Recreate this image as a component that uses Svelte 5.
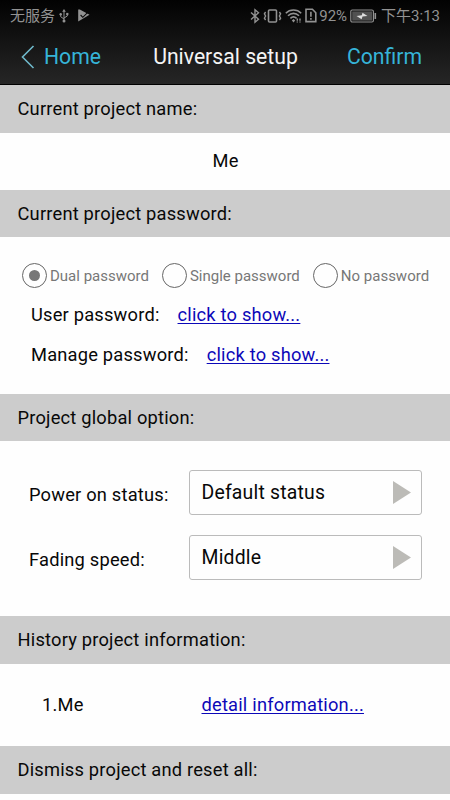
<script lang="ts">
	const modes = ['Dual password', 'Single password', 'No password'];
	let mode = $state('Dual password');

	const passwords = ['User password:', 'Manage password:'];
	const options = [
		{ label: 'Power on status:', value: 'Default status' },
		{ label: 'Fading speed:', value: 'Middle' }
	];
	const history = ['Me'];
</script>

<div class="screen">
	<div class="top">
		<div class="status">
			<span class="carrier">无服务</span>
			<svg class="usb" width="10" height="16" viewBox="0 0 10 16" fill="none" stroke="currentColor">
				<path d="M5 3v10M1.7 6.5v2.2L5 11M8.3 6v2L5 10" />
				<path d="M5 1l1.8 2.8H3.2z" fill="currentColor" stroke="none" />
				<circle cx="5" cy="13" r="1.5" fill="currentColor" stroke="none" />
				<circle cx="1.7" cy="6.2" r="1.2" fill="currentColor" stroke="none" />
				<path d="M7.2 4.9h2.2v2.2H7.2z" fill="currentColor" stroke="none" />
			</svg>
			<svg class="play" width="12" height="13" viewBox="0 0 12 13">
				<path d="M.2.5h1.6l9.7 5.2L.2 12.5z" fill="currentColor" />
				<path d="M2.6 6l2.2 2.3L10.5 2.6" fill="none" stroke="#080808" stroke-width="1.1" />
			</svg>
			<span class="grow"></span>
			<svg width="10" height="16" viewBox="0 0 10 16" fill="none" stroke="currentColor" stroke-width="1.4">
				<path d="M1 4.5l7.5 6.7L5 14.3V1.7l3.5 3.1L1 11.5" />
			</svg>
			<svg class="vibrate" width="19" height="16" viewBox="0 0 19 16" fill="none" stroke="currentColor" stroke-width="1.6">
				<rect x="5.5" y="2" width="8" height="12" rx="1" />
				<path d="M2.6 4L1.4 5.8 2.6 8l-1.2 2.2L2.6 12M16.4 4l1.2 1.8L16.4 8l1.2 2.2-1.2 1.8" stroke-width="1.4" />
			</svg>
			<svg class="wifi" width="17" height="15" viewBox="0 0 17 15" fill="none" stroke="currentColor" stroke-width="1.6">
				<path d="M.8 5.2C5 1 12 1 16.2 5.2M3 7.8c3.2-3.2 7.8-3.2 11 0M5.4 10.3c2-1.9 4.2-1.9 6.2 0" />
				<path d="M8.5 11l1.7 1.6-1.7 1.8-1.7-1.8z" fill="currentColor" stroke="none" />
				<path d="M12.3 10.4v4M15 10.4v4" stroke-width="1.4" stroke-dasharray="2.4 .6" />
			</svg>
			<svg class="sim" width="12" height="15" viewBox="0 0 12 15" fill="none" stroke="currentColor" stroke-width="1.6">
				<path d="M1 1.2h6.4l3.4 3.6v8.8H1z" />
				<path d="M5.9 3.8v5M5.9 10v1.8" />
			</svg>
			<span class="percent">92%</span>
			<svg class="battery" width="27" height="14" viewBox="0 0 27 14">
				<rect x=".8" y="1" width="22.6" height="12" rx="1.5" fill="none" stroke="currentColor" stroke-width="1.2" />
				<rect x="2.2" y="2.4" width="19.8" height="9.2" fill="#515151" />
				<path d="M6.5 6.9l5.3-.6.7-2.5 5 3.3-5 .5-.9 2.6z" fill="#ddd" />
				<path d="M25.3 4v6" stroke="currentColor" stroke-width="1.6" />
			</svg>
			<span class="clock">下午3:13</span>
		</div>
		<nav class="nav">
			<button class="home">
				<svg width="14" height="24" viewBox="0 0 14 24" fill="none" stroke="#6fb9cb" stroke-width="1.6">
					<path d="M12.5 1L1.5 12l11 11" />
				</svg>
				<span>Home</span>
			</button>
			<h1>Universal setup</h1>
			<button class="confirm">Confirm</button>
		</nav>
	</div>

	<h2>Current project name:</h2>
	<section class="name">Me</section>

	<h2>Current project password:</h2>
	<section class="password">
		<div class="modes">
			{#each modes as m (m)}
				<button class="mode" onclick={() => (mode = m)}>
					<span class="dot" class:on={mode === m}></span>
					<span>{m}</span>
				</button>
			{/each}
		</div>
		{#each passwords as p (p)}
			<div class="secret">
				<span>{p}</span>
				<a href="#show">click to show...</a>
			</div>
		{/each}
	</section>

	<h2>Project global option:</h2>
	<section class="options">
		{#each options as o (o.label)}
			<div class="option">
				<span class="label">{o.label}</span>
				<button class="select">
					<span>{o.value}</span>
					<svg width="18" height="23" viewBox="0 0 18 23"><path d="M0 0l18 11.5L0 23z" fill="#bcbbb7" /></svg>
				</button>
			</div>
		{/each}
	</section>

	<h2>History project information:</h2>
	<section class="history">
		{#each history as h, i (i)}
			<div class="entry">
				<span>{i + 1}.{h}</span>
				<a href="#detail">detail information...</a>
			</div>
		{/each}
	</section>

	<h2>Dismiss project and reset all:</h2>
</div>

<style>
	:global(body) { background: #fefefe; }
	.screen { width: 450px; height: 800px; overflow: hidden; background: #fefefe; color: #080808; font-family: Roboto, "Noto Sans CJK SC", sans-serif; font-size: 18.3px; line-height: 22px; letter-spacing: 0.2px; }
	button { padding: 0; border: 0; background: none; font: inherit; letter-spacing: inherit; color: inherit; }
	svg { display: block; flex: none; }

	.top { height: 85px; box-sizing: border-box; border-bottom: 1px solid #000; background: linear-gradient(#020202, #262626); }
	.status { display: flex; align-items: center; height: 31px; padding: 0 10px; color: #929292; font-size: 15px; letter-spacing: 0; white-space: nowrap; }
	.usb { margin-left: 4px; }
	.play { margin-left: 9px; }
	.grow { flex: 1; }
	.vibrate { margin-left: 3px; }
	.wifi { margin-left: 3px; }
	.sim { margin-left: 3px; }
	.percent { margin-left: 2px; font-size: 15px; }
	.battery { margin-left: 3px; }
	.clock { margin-left: 4px; }
	.nav { display: grid; grid-template-columns: 1fr auto 1fr; align-items: center; height: 52px; padding: 0 28px 0 21px; font-size: 21.2px; letter-spacing: 0; color: #36b4d8; }
	.home { display: flex; align-items: center; gap: 9px; }
	h1 { margin: 0 0 0 8px; font-size: 21.2px; font-weight: 400; color: #f4f4f4; }
	.confirm { justify-self: end; }

	h2 { height: 47.5px; margin: 0; padding-left: 17.5px; font-size: 18.3px; font-weight: 400; line-height: 47px; background: #ccc; }
	a { color: #0c08b8; text-decoration: underline; text-decoration-thickness: 1px; text-underline-offset: 2px; }

	.name { height: 57px; padding-left: 1px; line-height: 56px; text-align: center; }
	.password { height: 156.5px; box-sizing: border-box; padding-top: 26px; }
	.modes { display: flex; gap: 13px; padding-left: 22px; margin-bottom: 13px; color: #777; font-size: 15px; letter-spacing: 0; }
	.mode { display: flex; align-items: center; gap: 3px; height: 25px; white-space: nowrap; }
	.dot { display: grid; place-items: center; width: 25px; height: 25px; box-sizing: border-box; border: 1px solid #666; border-radius: 50%; }
	.dot.on::after { content: ''; width: 11px; height: 11px; border-radius: 50%; background: #777; }
	.secret { display: flex; gap: 18px; height: 40px; padding-left: 31px; line-height: 28px; }

	.options { display: flex; flex-direction: column; gap: 20px; height: 175px; box-sizing: border-box; padding: 29px 28px 0 29px; }
	.option { display: flex; height: 45px; }
	.label { width: 160px; line-height: 49px; }
	.select { display: flex; align-items: center; justify-content: space-between; flex: 1; padding: 0 10px 0 11.5px; border: 1px solid #bbb; border-radius: 3px; font-size: 19.4px; }

	.history { height: 82.5px; }
	.entry { display: grid; grid-template-columns: 159.5px auto; padding-left: 42px; line-height: 82px; }
</style>
